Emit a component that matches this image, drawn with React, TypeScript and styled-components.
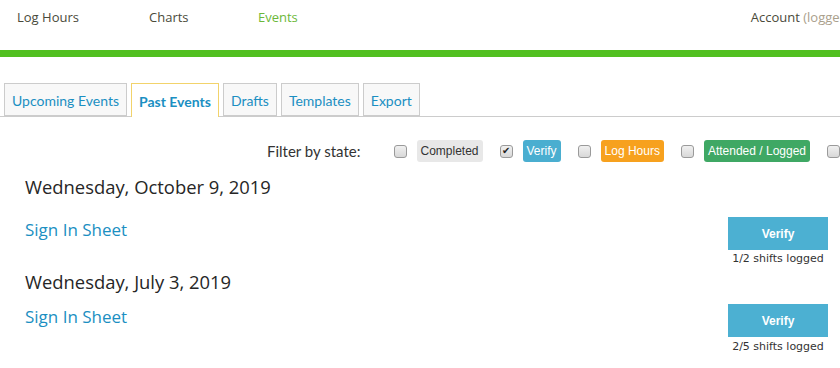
import React from "react";
import styled, { createGlobalStyle } from "styled-components";

const Global = createGlobalStyle`
  html, body { margin: 0; padding: 0; background: #fff; }
  body { width: 840px; height: 368px; overflow: hidden; }
`;

const Page = styled.div`
  width: 840px;
  overflow: hidden;
`;

const NavBar = styled.nav`
  height: 42px;
  display: flex;
  align-items: flex-start;
  padding-top: 8px;
  box-sizing: content-box;
  font-family: "Open Sans", sans-serif;
  font-size: 13px;
  border-bottom: 7px solid #52c021;
`;

const NavLink = styled.a<{ $active?: boolean; $w: number }>`
  width: ${(p) => p.$w}px;
  color: ${(p) => (p.$active ? "#6cb83a" : "#4a4a3a")};
  text-decoration: none;
  white-space: nowrap;
  line-height: 18px;
`;

const NavLeft = styled.div`
  display: flex;
  padding-left: 17px;
  flex: 1;
`;

const Account = styled.div`
  white-space: nowrap;
  color: #4a4a3a;
  line-height: 18px;
  margin-right: -26px;
`;

const Muted = styled.span`
  color: #aaa08c;
`;

const Tabs = styled.div`
  display: flex;
  gap: 4px;
  margin-top: 26px;
  padding-left: 4px;
  border-bottom: 1px solid #cccccc;
  height: 33px;
  box-sizing: content-box;
`;

const Tab = styled.div<{ $active?: boolean }>`
  display: flex;
  align-items: center;
  box-sizing: border-box;
  height: ${(p) => (p.$active ? "34px" : "33px")};
  padding: 1px 7px 0;
  border: 1px solid ${(p) => (p.$active ? "#f2d36b" : "#cccccc")};
  border-bottom: ${(p) => (p.$active ? "none" : "1px solid #cccccc")};
  background: ${(p) => (p.$active ? "#ffffff" : "#f8f8f8")};
  color: #1b8fc2;
  font-family: "Lato", sans-serif;
  font-size: 14px;
  font-weight: ${(p) => (p.$active ? 700 : 400)};
  white-space: nowrap;
`;

const FilterRow = styled.div`
  display: flex;
  align-items: center;
  height: 22px;
  margin-top: 23px;
  padding-left: 267px;
  white-space: nowrap;
`;

const FilterLabel = styled.span`
  font-family: "Lato", sans-serif;
  font-size: 15px;
  color: #333;
  margin-right: 33px;
`;

const Check = styled.span<{ $checked?: boolean }>`
  width: 11px;
  height: 11px;
  border: 1px solid #9a9a9a;
  border-radius: 3px;
  background: linear-gradient(#f0f0f0, #d8d8d8);
  display: inline-flex;
  align-items: center;
  justify-content: center;
  font-size: 10px;
  line-height: 1;
  color: #222;
  flex: none;
  margin-right: 10px;
`;

const Badge = styled.span<{ $bg: string; $fg: string }>`
  font-family: "Liberation Sans", Arial, sans-serif;
  font-size: 12px;
  background: ${(p) => p.$bg};
  color: ${(p) => p.$fg};
  border-radius: 3px;
  height: 22px;
  display: inline-flex;
  align-items: center;
  padding: 0 4px;
  margin-right: 17px;
  flex: none;
`;

const Content = styled.div`
  padding-left: 25px;
  padding-right: 12px;
`;

const DayHeading = styled.h2<{ $mt: number }>`
  margin: ${(p) => p.$mt}px 0 0;
  font-family: "Open Sans", sans-serif;
  font-weight: 500;
  font-size: 18.4px;
  line-height: 24px;
  color: #262626;
`;

const EventRow = styled.div<{ $mt: number }>`
  display: flex;
  justify-content: space-between;
  align-items: flex-start;
  margin-top: ${(p) => p.$mt}px;
`;

const EventLink = styled.a<{ $mt: number }>`
  font-family: "Open Sans", sans-serif;
  font-size: 17px;
  line-height: 24px;
  color: #1b8fc2;
  text-decoration: none;
  margin-top: ${(p) => p.$mt}px;
`;

const Actions = styled.div<{ $gap: number }>`
  display: flex;
  flex-direction: column;
  align-items: center;
  gap: ${(p) => p.$gap}px;
  width: 100px;
`;

const VerifyButton = styled.button`
  width: 100px;
  height: 33px;
  border: none;
  background: #4cb0d2;
  color: #fff;
  font-family: "Liberation Sans", Arial, sans-serif;
  font-weight: 700;
  font-size: 12px;
  padding: 0;
`;

const Shifts = styled.div`
  font-family: "DejaVu Sans", sans-serif;
  font-size: 11px;
  line-height: 16px;
  color: #333;
  white-space: nowrap;
`;

const events = [
  { date: "Wednesday, October 9, 2019", shifts: "1/2 shifts logged", hm: 13, rm: 18, lm: 1, gap: 1 },
  { date: "Wednesday, July 3, 2019", shifts: "2/5 shifts logged", hm: 3, rm: 10, lm: 1, gap: 2 },
];

export default function App() {
  return (
    <Page>
      <Global />
      <NavBar>
        <NavLeft>
          <NavLink $w={132}>Log Hours</NavLink>
          <NavLink $w={109}>Charts</NavLink>
          <NavLink $active $w={60}>Events</NavLink>
        </NavLeft>
        <Account>
          Account <Muted>(logged in)</Muted>
        </Account>
      </NavBar>
      <Tabs>
        <Tab>Upcoming Events</Tab>
        <Tab $active>Past Events</Tab>
        <Tab>Drafts</Tab>
        <Tab>Templates</Tab>
        <Tab>Export</Tab>
      </Tabs>
      <FilterRow>
        <FilterLabel>Filter by state:</FilterLabel>
        <Check />
        <Badge $bg="#e8e8e8" $fg="#333">Completed</Badge>
        <Check $checked>✔</Check>
        <Badge $bg="#4aaed0" $fg="#fff">Verify</Badge>
        <Check />
        <Badge $bg="#f7a11e" $fg="#fff">Log Hours</Badge>
        <Check />
        <Badge $bg="#3fa864" $fg="#fff">Attended / Logged</Badge>
        <Check />
      </FilterRow>
      <Content>
        {events.map((e) => (
          <React.Fragment key={e.date}>
            <DayHeading $mt={e.hm}>{e.date}</DayHeading>
            <EventRow $mt={e.rm}>
              <EventLink href="#" $mt={e.lm}>Sign In Sheet</EventLink>
              <Actions $gap={e.gap}>
                <VerifyButton>Verify</VerifyButton>
                <Shifts>{e.shifts}</Shifts>
              </Actions>
            </EventRow>
          </React.Fragment>
        ))}
      </Content>
    </Page>
  );
}
